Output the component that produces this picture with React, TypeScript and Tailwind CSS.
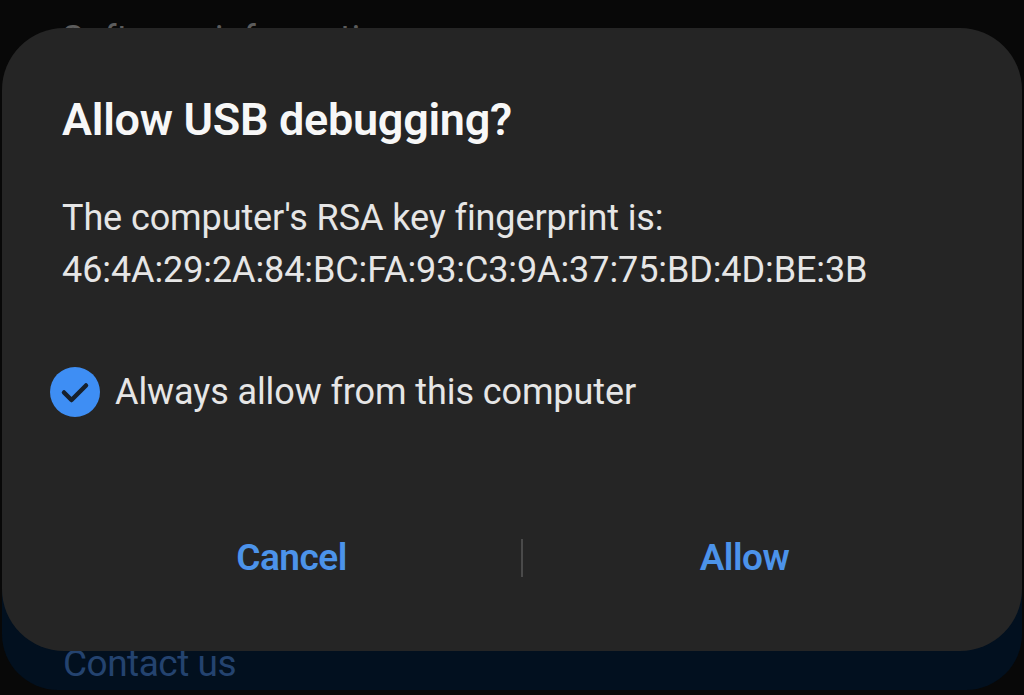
export default function App() {
  return (
    <div className="relative h-[695px] w-[1024px] overflow-hidden bg-[#080808] font-['Roboto','Liberation_Sans',sans-serif]">
      {/* dimmed page behind the dialog */}
      <div className="flex h-full flex-col justify-between">
        <p className="px-[62px] pt-[12px] text-[36px] text-[#5c5c5c]">Software information</p>
        <div className="mx-[2px] mb-[5px] h-[120px] rounded-b-[56px] bg-[#02101f] px-[61px] pt-[72px]">
          <p className="text-[37px] leading-[44px] tracking-[-0.5px] text-[#24436f]">Contact us</p>
        </div>
      </div>

      {/* dialog */}
      <div className="absolute left-[2px] right-[2px] top-[28px] h-[623px] rounded-[62px] bg-[#252525] pt-[66px]">
        <h1 className="px-[60px] text-[45px] font-semibold leading-[52px] tracking-[-0.3px] text-[#f7f7f7]">Allow USB debugging?</h1>

        <div className="mt-[46px] px-[60px] text-[36px] leading-[52px] tracking-[-0.1px] text-[#e6e6e6]">
          <p>The computer's RSA key fingerprint is:</p>
          <p>46:4A:29:2A:84:BC:FA:93:C3:9A:37:75:BD:4D:BE:3B</p>
        </div>

        <div className="ml-[47px] mt-[69px] flex items-center gap-[14px]">
          <svg width="52" height="52" viewBox="0 0 52 52">
            <circle cx="26" cy="26" r="25" fill="#3e8ef4" />
            <path d="M15 26.5 L22.5 34 L37 19.5" fill="none" stroke="#16202c" strokeWidth="4.5" strokeLinecap="round" strokeLinejoin="round" />
          </svg>
          <span className="text-[36px] tracking-[-0.1px] text-[#e6e6e6]">Always allow from this computer</span>
        </div>

        <div className="mt-[111px] flex items-center pl-[60px] pr-[56px]">
          <button className="w-[459px] text-[37px] font-semibold tracking-[-0.5px] text-[#4c93ea]">Cancel</button>
          <div className="h-[38px] w-[2px] bg-[#4a4a4a]" />
          <button className="flex-1 text-[37px] font-semibold tracking-[-0.5px] text-[#4c93ea]">Allow</button>
        </div>
      </div>
    </div>
  );
}
